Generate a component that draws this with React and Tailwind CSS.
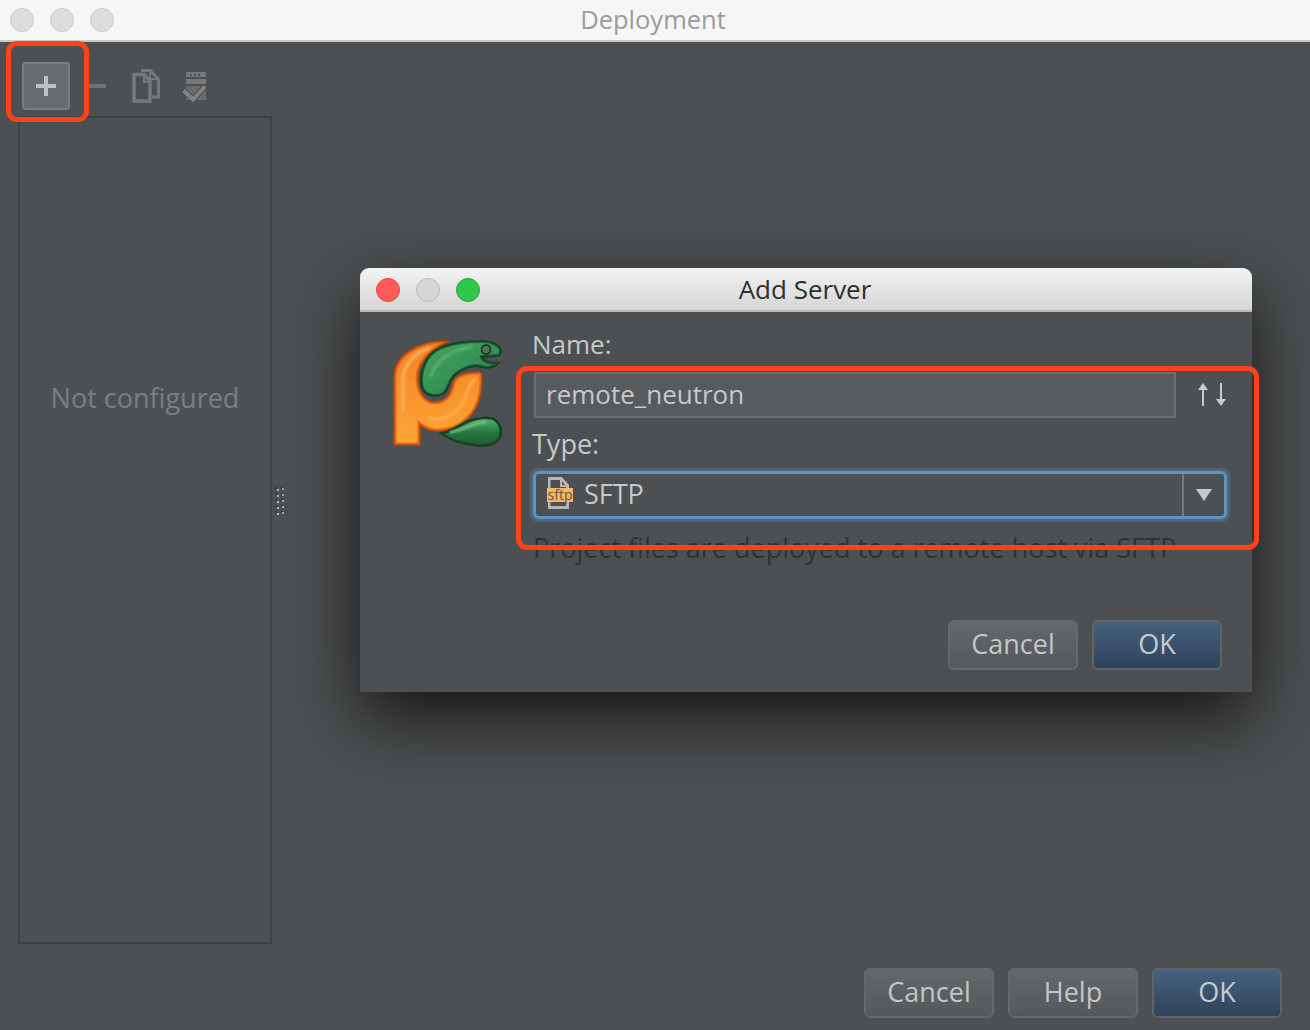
import React from 'react';

const font = { fontFamily: '"Open Sans", "Noto Sans", sans-serif' };

function Light({ color = 'bg-[#dcdcdc] border-[#cdcdcd]' }) {
    return <span className={`block w-6 h-6 rounded-full border ${color}`}></span>;
}

function Button({ label, primary }) {
    return (
        <button
            className={
                primary
                    ? 'w-[130px] h-[50px] pb-1 rounded-[6px] border-2 border-[#606466] bg-gradient-to-b from-[#46627f] to-[#2f435b] text-[27px] leading-none text-[#c8cacb]'
                    : 'w-[130px] h-[50px] pb-1 rounded-[6px] border-2 border-[#65686a] bg-gradient-to-b from-[#64686a] to-[#54585a] text-[27px] leading-none text-[#c4c6c7]'
            }
        >
            {label}
        </button>
    );
}

function CopyIcon() {
    return (
        <svg width="30" height="34" viewBox="0 0 30 34" className="block">
            <path d="M10 1.500h9l8.500 8.500V28H21" fill="none" stroke="#757778" strokeWidth="3" />
            <path d="M19 2v8h8" fill="none" stroke="#757778" strokeWidth="2" />
            <path d="M3 5.500h10l6 6.500V32H3z" fill="#4d5052" stroke="#757778" strokeWidth="3.500" />
            <path d="M13 5v8h6" fill="none" stroke="#757778" strokeWidth="2" />
        </svg>
    );
}

function ServerCheckIcon() {
    return (
        <svg width="26" height="32" viewBox="0 0 26 32" className="block">
            <rect x="4" y="2" width="20" height="5" fill="#757778" />
            <rect x="8" y="4" width="2" height="2" fill="#4d5052" />
            <rect x="12" y="4" width="2" height="2" fill="#4d5052" />
            <rect x="16" y="4" width="2" height="2" fill="#4d5052" />
            <rect x="4" y="9" width="20" height="5" fill="#757778" />
            <rect x="4" y="16" width="20" height="14" fill="#696b6c" />
            <path d="M1.500 20.500l9.500 9 12-13" fill="none" stroke="#4d5052" strokeWidth="6" />
            <path d="M1.500 20.500l9.500 9 12-13" fill="none" stroke="#808283" strokeWidth="4" />
        </svg>
    );
}

function Grip() {
    const dots = [0, 6, 12, 18, 24];
    return (
        <svg width="9" height="30" viewBox="0 0 9 30" className="block">
            {dots.map((y) => (
                <g key={y}>
                    <rect x="0" y={y} width="2" height="2" fill="#37393a" />
                    <rect x="6" y={y} width="2" height="2" fill="#37393a" />
                    <rect x="2" y={y + 2} width="2" height="2" fill="#b4b6b7" />
                    <rect x="7" y={y + 1} width="2" height="2" fill="#a4a6a7" />
                </g>
            ))}
        </svg>
    );
}

const orangePath =
    'M1 105V38C1 15 25 0 57 1C43 6 25 20 25 38C25 52 32 62 42 62C52 62 58 54 60 43C62 35 74 32 87 32C90 34 89 44 88 52C85 72 70 91 44 91C36 91 31 88 27 85V105Z';
const snakePath =
    'M87 1C97 0 108 5 108 11C108 14 106 16 105 16L89 17C91 22 97 23 106 23C102 27 98 28 94 28C90 28 86 26 82 26C74 27 63 32 59 39C55 45 55 51 50 54C44 58 34 56 30 50C27 45 27 34 31 25C35 12 50 1 87 1Z';
const tailPath =
    'M47 93C58 92 66 84 77 80C86 77 98 76 103 80C108 84 110 92 107 98C104 104 98 106 90 106C74 106 58 101 47 93Z';

function Logo() {
    return (
        <svg width="110" height="108" viewBox="0 0 110 108" className="block">
            <defs>
                <linearGradient id="orange" x1="0" y1="0" x2="0" y2="1">
                    <stop offset="0" stopColor="#f28426" />
                    <stop offset="1" stopColor="#fda436" />
                </linearGradient>
                <linearGradient id="green" x1="0" y1="0" x2="1" y2="1">
                    <stop offset="0" stopColor="#45a564" />
                    <stop offset="1" stopColor="#2a8048" />
                </linearGradient>
                <linearGradient id="tail" x1="0" y1="0" x2="0" y2="1">
                    <stop offset="0" stopColor="#5ab56f" />
                    <stop offset="0.5" stopColor="#2a7a40" />
                    <stop offset="1" stopColor="#1c5a2d" />
                </linearGradient>
                <clipPath id="orangeClip"><path d={orangePath} /></clipPath>
                <clipPath id="snakeClip"><path d={snakePath} /></clipPath>
                <clipPath id="tailClip"><path d={tailPath} /></clipPath>
                <filter id="soft" x="-20%" y="-20%" width="140%" height="140%">
                    <feGaussianBlur stdDeviation="1.200" />
                </filter>
            </defs>
            <path d={orangePath} fill="url(#orange)" />
            <path d={orangePath} fill="none" stroke="#e06c1a" strokeWidth="5" clipPath="url(#orangeClip)" />
            <path d="M10 70V38C11 24 22 13 36 8" fill="none" stroke="#ffae5c" strokeWidth="3" strokeLinecap="round" filter="url(#soft)" />
            <path d="M36 78C52 82 66 72 72 58C75 50 76 44 82 39" fill="none" stroke="#ffba5a" strokeWidth="3" strokeLinecap="round" opacity="0.7" filter="url(#soft)" />
            <path d={orangePath} fill="none" stroke="#b5470f" strokeWidth="1.500" />
            <path d={snakePath} fill="url(#green)" />
            <path d={snakePath} fill="none" stroke="#1c6033" strokeWidth="4" clipPath="url(#snakeClip)" />
            <path d="M38 36C42 22 56 10 78 7" fill="none" stroke="#62ba7a" strokeWidth="3" strokeLinecap="round" opacity="0.7" filter="url(#soft)" />
            <path d={snakePath} fill="none" stroke="#133f20" strokeWidth="1.500" />
            <circle cx="93" cy="9.500" r="4.500" fill="#5a6f60" stroke="#0f3019" strokeWidth="1.500" />
            <path d={tailPath} fill="url(#tail)" />
            <path d={tailPath} fill="none" stroke="#164c26" strokeWidth="4" clipPath="url(#tailClip)" />
            <path d="M58 92C70 90 78 84 92 82" fill="none" stroke="#74c888" strokeWidth="2.500" strokeLinecap="round" filter="url(#soft)" />
            <path d={tailPath} fill="none" stroke="#133f20" strokeWidth="1.500" />
        </svg>
    );
}

export default function App() {
    return (
        <div className="relative w-[1310px] h-[1030px] overflow-hidden bg-[#4d5052] flex flex-col" style={font}>
            {/* ventana de fondo */}
            <div className="relative h-[42px] shrink-0 bg-[#f6f6f6] border-b-2 border-[#c9c9c9] flex items-center justify-center">
                <div className="absolute left-[10px] top-[8px] flex gap-4">
                    <Light />
                    <Light />
                    <Light />
                </div>
                <span className="mr-1 text-[25.500px] leading-none text-[#9b9b9b]">Deployment</span>
            </div>

            <div className="h-[74px] shrink-0 flex items-center pl-[22px] pt-[14px]">
                <div className="w-12 h-12 rounded-[4px] border-2 border-[#7b7e80] bg-[#686c6e] flex items-center justify-center">
                    <svg width="20" height="20" viewBox="0 0 20 20" className="block">
                        <path d="M8 0h4v8h8v4h-8v8h-4v-8h-8v-4h8z" fill="#bfc1c2" />
                    </svg>
                </div>
                <span className="block ml-[18px] w-[18px] h-1 bg-[#6f7172]"></span>
                <div className="ml-[25px]"><CopyIcon /></div>
                <div className="ml-[21px]"><ServerCheckIcon /></div>
            </div>

            <div className="flex items-center pl-[18px]">
                <div className="w-[254px] h-[828px] border-2 border-[#3e4041] flex items-center justify-center pb-[264px]">
                    <span className="text-[27px] text-[#7b7d7f]">Not configured</span>
                </div>
                <div className="ml-[3px] mb-[56px]"><Grip /></div>
            </div>

            <div className="flex justify-end gap-[14px] pr-[28px] pt-[24px]">
                <Button label="Cancel" />
                <Button label="Help" />
                <Button label="OK" primary />
            </div>

            {/* dialogo Add Server */}
            <div className="absolute left-[360px] top-[268px] w-[892px] h-[424px] bg-[#4d5052] rounded-t-[9px] shadow-[0_26px_70px_rgba(0,0,0,0.75)] flex flex-col">
                <div className="relative h-[44px] shrink-0 rounded-t-[9px] bg-gradient-to-b from-[#f3f3f3] to-[#d5d5d5] border-b-2 border-[#b9b9b9] flex items-center justify-center">
                    <div className="absolute left-4 top-[10px] flex gap-4">
                        <Light color="bg-[#fc5b57] border-[#e34641]" />
                        <Light color="bg-[#d6d6d6] border-[#bcbcbc]" />
                        <Light color="bg-[#2fc84b] border-[#27aa35]" />
                    </div>
                    <span className="mr-[2px] text-[26px] leading-none text-[#2f2f2f]">Add Server</span>
                </div>

                <div className="flex flex-1 pl-[33px] pr-[25px]">
                    <div className="w-[110px] pt-[28px] shrink-0"><Logo /></div>
                    <div className="flex-1 ml-[30px] flex flex-col">
                        <label className="pt-[15px] -ml-px h-[60px] text-[26px] leading-[34px] text-[#c6c8c9]">Name:</label>
                        <div className="flex items-center">
                            <div className="ml-[1px] w-[642px] h-[46px] border-2 border-[#6b6e70] bg-[#585b5d] pl-[10px] text-[26px] leading-[40px] text-[#c6c8c9]">
                                remote_neutron
                            </div>
                            <svg width="30" height="26" viewBox="0 0 30 26" className="block ml-[22px]">
                                <path d="M5 24V4" fill="none" stroke="#c6c8c9" strokeWidth="2" />
                                <path d="M0 8L5 1l5 7z" fill="#c6c8c9" />
                                <path d="M23 1v20" fill="none" stroke="#c6c8c9" strokeWidth="2" />
                                <path d="M18 17l5 7 5-7z" fill="#c6c8c9" />
                            </svg>
                        </div>
                        <label className="pt-[9px] -ml-px h-[53px] text-[27px] leading-[34px] text-[#c6c8c9]">Type:</label>
                        <div className="w-[694px] h-[48px] rounded-[6px] border-[3px] border-[#5c94c5] shadow-[0_0_2px_3px_rgba(92,148,197,0.35)] flex items-center">
                            <div className="flex-1 h-full flex items-center pl-[11px] border-r-2 border-[#77797b]">
                                <div className="relative w-[28px] h-[32px] -mt-[4px]">
                                    <svg width="24" height="32" viewBox="0 0 24 32" className="block">
                                        <path d="M1 0h14l7 8v24H1z" fill="#b5b7b8" />
                                        <path d="M3.500 3h10.500l5 6v20H3.500z" fill="#4d5052" />
                                        <path d="M14 1v8h7" fill="none" stroke="#b5b7b8" strokeWidth="2" />
                                    </svg>
                                    <span className="absolute left-0 top-[11px] w-[26px] h-[14px] bg-[#f5b565] text-[14px] leading-[13px] text-center text-[#66563c]">sftp</span>
                                </div>
                                <span className="ml-[9px] pb-[3px] text-[27px] leading-none text-[#c6c8c9]">SFTP</span>
                            </div>
                            <div className="w-[40px] flex justify-center">
                                <svg width="16" height="12" viewBox="0 0 16 12" className="block">
                                    <path d="M0 0h16l-8 12z" fill="#c6c8c9" />
                                </svg>
                            </div>
                        </div>
                        <p className="mt-[12px] text-[27px] leading-[34px] whitespace-nowrap text-[#2f3234]">
                            Project files are deployed to a remote host via SFTP
                        </p>
                        <div className="flex justify-end gap-[14px] pt-[55px] pr-[6px]">
                            <Button label="Cancel" />
                            <Button label="OK" primary />
                        </div>
                    </div>
                </div>
            </div>

            {/* marcas rojas */}
            <div className="absolute left-[6px] top-[41px] w-[83px] h-[81px] rounded-[11px] border-[5px] border-[#fc4319]"></div>
            <div className="absolute left-[516px] top-[366px] w-[743px] h-[184px] rounded-[11px] border-[5px] border-[#fc4319]"></div>
        </div>
    );
}
